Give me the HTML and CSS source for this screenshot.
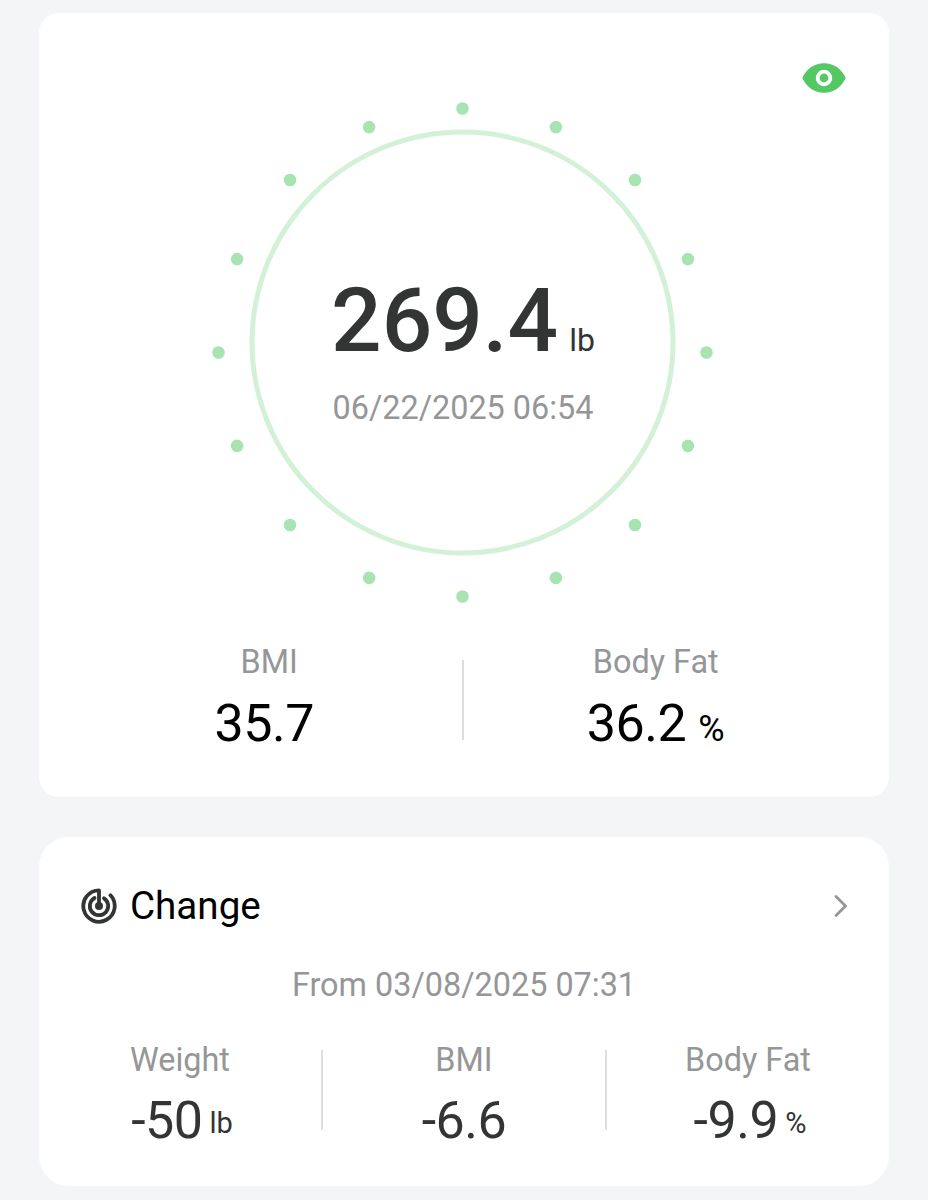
FILE: index.html
```html
<!DOCTYPE html>
<html lang="en">
<head>
    <meta charset="UTF-8">
    <meta name="viewport" content="width=device-width, initial-scale=1.0">
    <title>Weight</title>
    <link rel="stylesheet" href="styles.css">
</head>
<body>

<!-- Latest measurement -->
<section class="card summary">
    <div class="summary-top">
        <svg class="eye-icon" viewBox="0 0 44 30">
            <path d="M0.3 15C4.5 5.5 12.5 0.3 22 0.3S39.5 5.5 43.7 15C39.5 24.5 31.5 29.7 22 29.7S4.5 24.5 0.3 15z" fill="#54c963"/>
            <circle cx="22" cy="15" r="6.3" fill="none" stroke="#fff" stroke-width="3.8"/>
        </svg>
    </div>

    <div class="dial">
        <svg class="dial-ring" viewBox="0 0 510 510">
            <circle cx="254.5" cy="244.5" r="210.5" fill="none" stroke="#d3f1d7" stroke-width="5"/>
            <g fill="#a8e4b1">
                <circle cx="254.5" cy="10.5" r="6.3"/>
                <circle cx="347.9" cy="29.1" r="6.3"/>
                <circle cx="427" cy="82" r="6.3"/>
                <circle cx="479.9" cy="161.1" r="6.3"/>
                <circle cx="498.5" cy="254.5" r="6.3"/>
                <circle cx="479.9" cy="347.9" r="6.3"/>
                <circle cx="427" cy="427" r="6.3"/>
                <circle cx="347.9" cy="479.9" r="6.3"/>
                <circle cx="254.5" cy="498.5" r="6.3"/>
                <circle cx="161.1" cy="479.9" r="6.3"/>
                <circle cx="82" cy="427" r="6.3"/>
                <circle cx="29.1" cy="347.9" r="6.3"/>
                <circle cx="10.5" cy="254.5" r="6.3"/>
                <circle cx="29.1" cy="161.1" r="6.3"/>
                <circle cx="82" cy="82" r="6.3"/>
                <circle cx="161.1" cy="29.1" r="6.3"/>
            </g>
        </svg>
        <div class="dial-text">
            <div class="weight">269.4<span class="weight-unit">lb</span></div>
            <div class="date">06/22/2025 06:54</div>
        </div>
    </div>

    <div class="metrics">
        <div class="metric">
            <div class="label">BMI</div>
            <div class="value no-unit">35.7</div>
        </div>
        <div class="divider"></div>
        <div class="metric">
            <div class="label">Body Fat</div>
            <div class="value">36.2<span class="unit">%</span></div>
        </div>
    </div>
</section>

<!-- Change since first measurement -->
<section class="card change">
    <div class="change-header">
        <svg class="change-icon" viewBox="0 0 38 38">
            <g fill="none" stroke="#333534" stroke-width="3.8" stroke-linecap="round" stroke-linejoin="round">
                <path d="M19 19V3.3A15.7 15.7 0 1 0 30.5 8.3"/>
                <path d="M14.5 11A9.2 9.2 0 1 0 24 11.3"/>
            </g>
            <circle cx="19" cy="19" r="4" fill="#333534"/>
        </svg>
        <h2>Change</h2>
        <svg class="arrow" viewBox="0 0 16 24">
            <path d="M3 2.5L12.5 12L3 21.5" fill="none" stroke="#959697" stroke-width="2.8" stroke-linecap="round"/>
        </svg>
    </div>

    <div class="date">From 03/08/2025 07:31</div>

    <div class="metrics">
        <div class="metric">
            <div class="label">Weight</div>
            <div class="value">-50<span class="unit">lb</span></div>
        </div>
        <div class="divider"></div>
        <div class="metric">
            <div class="label">BMI</div>
            <div class="value no-unit">-6.6</div>
        </div>
        <div class="divider"></div>
        <div class="metric">
            <div class="label">Body Fat</div>
            <div class="value">-9.9<span class="unit">%</span></div>
        </div>
    </div>
</section>

</body>
</html>
```
FILE: styles.css
```css
* {
    box-sizing: border-box;
}

body {
    font-family: Roboto, sans-serif;
    margin: 0;
    padding: 13px 39px 14px;
    background: #f4f5f7;
    color: #333534;
    display: flex;
    flex-direction: column;
    gap: 40px;
}

.card {
    background: #fff;
}
.summary {
    height: 784px;
    border-radius: 20px;
    padding-top: 50px;
}
.change {
    height: 349px;
    border-radius: 30px;
    padding-top: 45px;
}

.summary-top {
    display: flex;
    justify-content: flex-end;
    padding-right: 43px;
}
.eye-icon {
    width: 44px;
    height: 30px;
}

/* Ring with the weight in the middle */
.dial {
    display: grid;
    width: 510px;
    margin: 5px 0 0 169px;
}
.dial-ring, .dial-text {
    grid-area: 1 / 1;
}
.dial-ring {
    width: 510px;
    height: 510px;
}
.dial-text {
    padding-top: 178px;
    text-align: center;
}
.weight {
    height: 90px;
    font-size: 89px;
    font-weight: 500;
    line-height: 90px;
    white-space: nowrap;
}
.weight-unit {
    font-size: 32px;
    font-weight: 400;
    line-height: 1;
    margin-left: 11px;
}
.date {
    font-size: 32.4px;
    line-height: 40px;
    color: #959697;
    text-align: center;
}
.dial-text .date {
    margin-top: 22px;
}

.metrics {
    display: flex;
    text-align: center;
}
.metric {
    flex: 1;
}
.label {
    font-size: 32.4px;
    line-height: 40px;
    color: #959697;
}
.value {
    font-size: 52px;
    line-height: 60px;
    letter-spacing: -0.5px;
    white-space: nowrap;
}
.unit {
    letter-spacing: 0;
    line-height: 1;
}
.divider {
    width: 2px;
    height: 80px;
    background: #dcdcdc;
}

.summary .metrics {
    padding: 0 41px 0 38px;
    margin-top: 34px;
}
.summary .value {
    margin-top: 12px;
    color: #000;
}
.summary .no-unit {
    padding-right: 10px;
}
.summary .unit {
    font-size: 36px;
    margin-left: 12px;
}
.summary .divider {
    margin-top: 18px;
}

.change-header {
    display: flex;
    align-items: center;
    height: 48px;
    padding: 0 40px 0 41px;
}
.change-icon {
    width: 38px;
    height: 38px;
}
.change h2 {
    margin: 0 auto 0 12px;
    font-size: 38.6px;
    font-weight: 400;
    line-height: 48px;
    color: #000;
}
.arrow {
    width: 16px;
    height: 24px;
}
.change .date {
    margin-top: 35px;
}
.change .metrics {
    margin-top: 35px;
}
.change .value {
    margin-top: 11px;
    padding-left: 4px;
}
.change .no-unit {
    padding-left: 0;
}
.change .unit {
    font-size: 29px;
    margin-left: 7px;
    vertical-align: 5px;
}
.change .divider {
    margin-top: 10px;
}
```
